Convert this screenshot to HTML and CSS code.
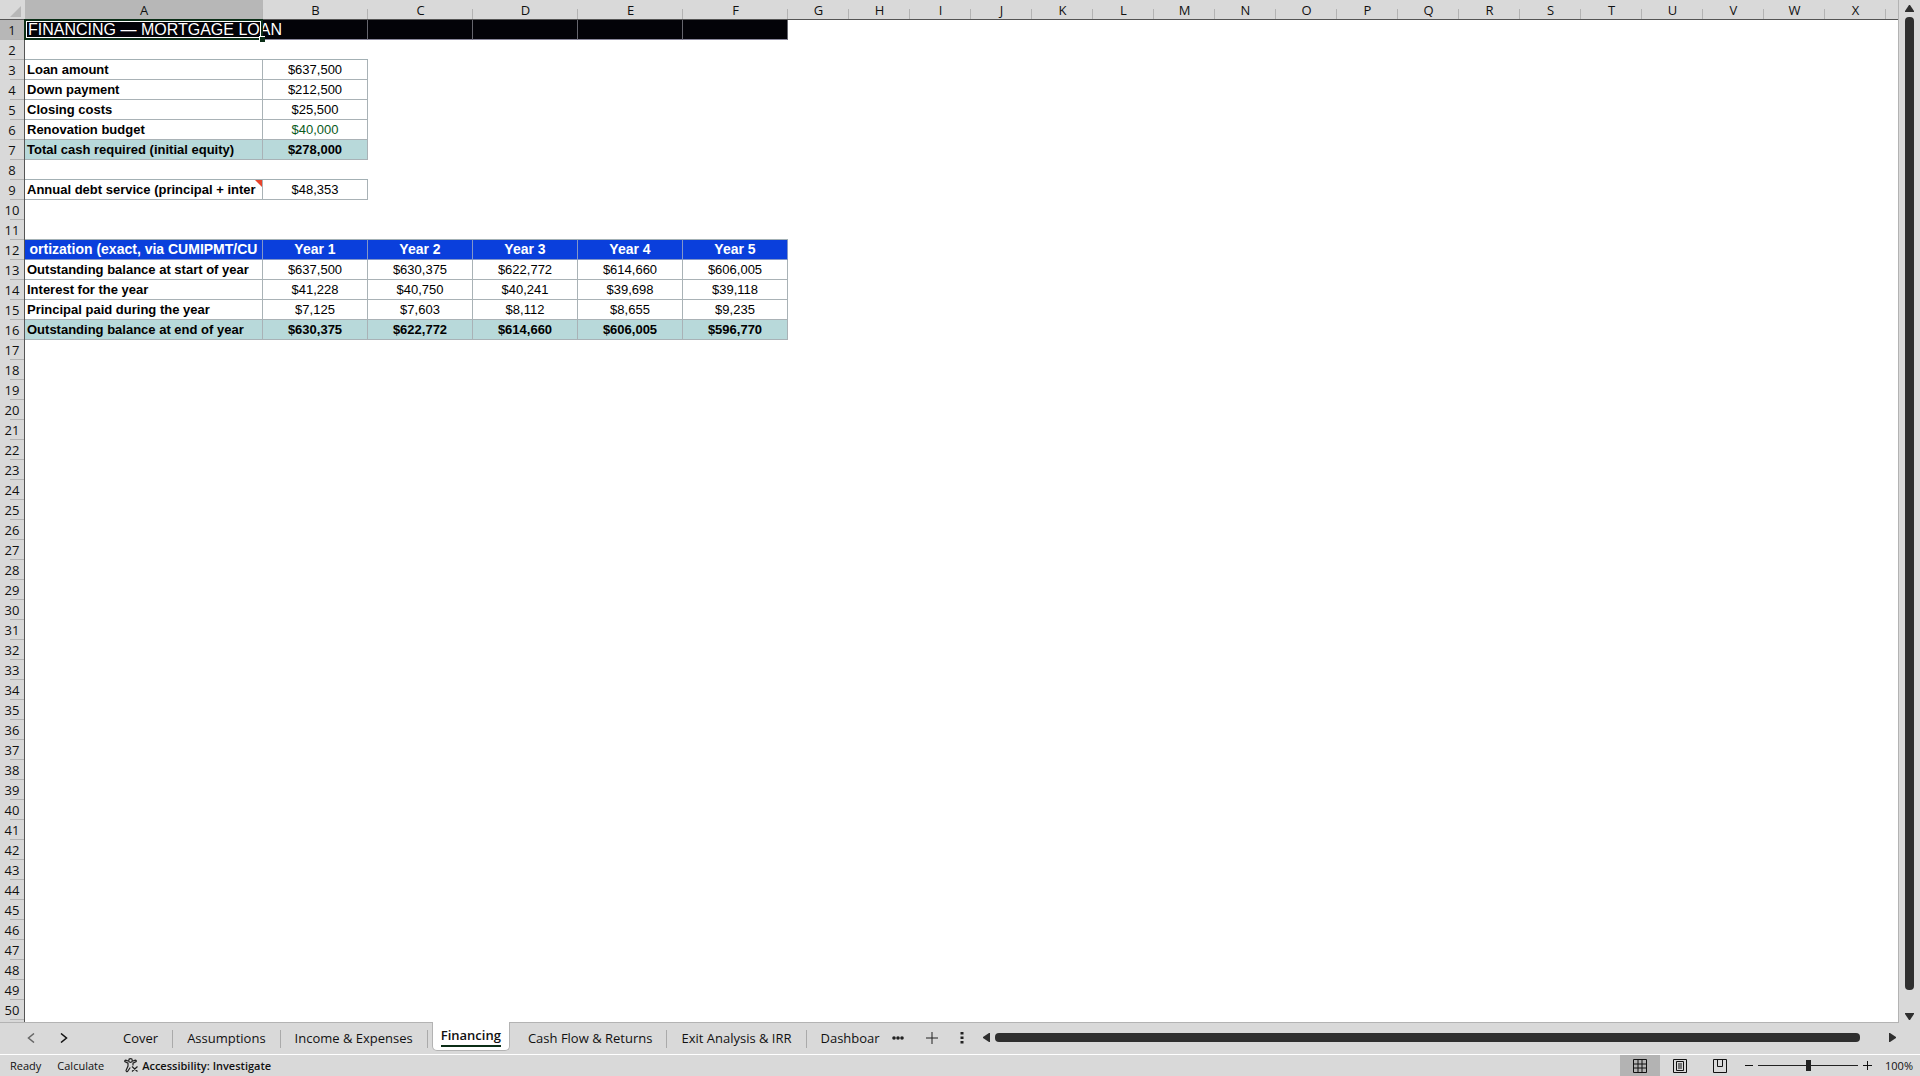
FILE: index.html
```html
<!DOCTYPE html>
<html lang="en">
<head>
    <meta charset="utf-8">
    <title>Financing</title>
    <link rel="stylesheet" href="styles.css">
</head>
<body>

    <main class="workspace">
        <div class="grid">
            <table class="sheet">
                <colgroup>
                    <col class="c-num"><col class="c-label">
                    <col class="c-val" span="5">
                    <col class="c-std" span="18">
                    <col>
                </colgroup>
                <thead>
                    <tr>
                        <th class="corner"><svg width="11" height="11" viewBox="0 0 11 11"><path d="M11 0V11H0Z" fill="#b7b7b7"/></svg></th>
                        <th class="active">A</th><th>B</th><th>C</th><th>D</th><th>E</th><th>F</th>
                        <th>G</th><th>H</th><th>I</th><th>J</th><th>K</th><th>L</th><th>M</th><th>N</th><th>O</th>
                        <th>P</th><th>Q</th><th>R</th><th>S</th><th>T</th><th>U</th><th>V</th><th>W</th><th>X</th>
                        <th class="rest"></th>
                    </tr>
                </thead>
                <tbody id="rows">
                    <tr class="title"><th class="active">1</th><td class="selected">FINANCING — MORTGAGE LOAN<span class="handle"></span></td><td></td><td></td><td></td><td></td><td></td></tr>
                    <tr class="above"><th>2</th><td></td><td></td></tr>
                    <tr class="data"><th>3</th><td>Loan amount</td><td>$637,500</td></tr>
                    <tr class="data"><th>4</th><td>Down payment</td><td>$212,500</td></tr>
                    <tr class="data"><th>5</th><td>Closing costs</td><td>$25,500</td></tr>
                    <tr class="data"><th>6</th><td>Renovation budget</td><td class="linked">$40,000</td></tr>
                    <tr class="data total"><th>7</th><td>Total cash required (initial equity)</td><td>$278,000</td></tr>
                    <tr class="above"><th>8</th><td></td><td></td></tr>
                    <tr class="data"><th>9</th><td class="note">Annual debt service (principal + inter</td><td>$48,353</td></tr>
                    <tr><th>10</th></tr>
                    <tr class="above"><th>11</th><td></td><td></td><td></td><td></td><td></td><td></td></tr>
                    <tr class="years"><th>12</th><td><div class="clip"><span>ortization (exact, via CUMIPMT/CU</span></div></td><td>Year 1</td><td>Year 2</td><td>Year 3</td><td>Year 4</td><td>Year 5</td></tr>
                    <tr class="data"><th>13</th><td>Outstanding balance at start of year</td><td>$637,500</td><td>$630,375</td><td>$622,772</td><td>$614,660</td><td>$606,005</td></tr>
                    <tr class="data"><th>14</th><td>Interest for the year</td><td>$41,228</td><td>$40,750</td><td>$40,241</td><td>$39,698</td><td>$39,118</td></tr>
                    <tr class="data"><th>15</th><td>Principal paid during the year</td><td>$7,125</td><td>$7,603</td><td>$8,112</td><td>$8,655</td><td>$9,235</td></tr>
                    <tr class="data total"><th>16</th><td>Outstanding balance at end of year</td><td>$630,375</td><td>$622,772</td><td>$614,660</td><td>$606,005</td><td>$596,770</td></tr>
                </tbody>
            </table>
        </div>
        <div class="vscroll">
            <svg width="9" height="7" viewBox="0 0 9 7"><path d="M4 0H5L9 6V7H0V6Z"/></svg>
            <div class="thumb"></div>
            <svg width="9" height="7" viewBox="0 0 9 7"><path d="M0 0H9V1L5 7H4L0 1Z"/></svg>
        </div>
    </main>

    <nav class="tabbar">
        <div class="arrows">
            <button aria-label="Previous sheet" class="dim"><svg width="8" height="10" viewBox="0 0 8 10"><path d="M7 .5 1.500 5 7 9.500"/></svg></button>
            <button aria-label="Next sheet"><svg width="8" height="10" viewBox="0 0 8 10"><path d="M1 .5 6.500 5 1 9.500"/></svg></button>
        </div>
        <div class="tabs">
            <button>Cover</button>
            <button>Assumptions</button>
            <button>Income &amp; Expenses</button>
            <button class="current"><span>Financing</span></button>
            <button>Cash Flow &amp; Returns</button>
            <button>Exit Analysis &amp; IRR</button>
            <button class="last">Dashboar</button>
        </div>
        <div class="tools">
            <button aria-label="More sheets"><svg width="12" height="4" viewBox="0 0 12 4"><circle cx="2" cy="2" r="1.800"/><circle cx="6" cy="2" r="1.800"/><circle cx="10" cy="2" r="1.800"/></svg></button>
            <button aria-label="New sheet"><svg width="12" height="12" viewBox="0 0 12 12"><path d="M5.500 0h1v5.500H12v1H6.500V12h-1V6.500H0v-1h5.500Z"/></svg></button>
            <button aria-label="Resize tabs"><svg width="4" height="12" viewBox="0 0 4 12"><path d="M.5 0h3v2.500h-3ZM.5 4.500h3V7h-3ZM.5 9h3v2.500h-3Z"/></svg></button>
        </div>
        <div class="hscroll">
            <svg width="7" height="9" viewBox="0 0 7 9"><path d="M7 0V9H6L0 5V4L6 0Z"/></svg>
            <div class="thumb"></div>
            <svg width="7" height="9" viewBox="0 0 7 9"><path d="M0 0V9H1L7 5V4L1 0Z"/></svg>
        </div>
    </nav>

    <footer class="status">
        <span class="ready">Ready</span>
        <span class="calc">Calculate</span>
        <button class="access">
            <svg width="15" height="15" viewBox="0 0 15 15" fill="none" stroke="#222" stroke-width="1.200">
                <circle cx="6.500" cy="2.500" r="1.800"/>
                <path d="M4.700 3.300 1.800 2.200Q.5 2.300.8 3.500L4 5.200V8L2 12.500Q2.200 14 3.500 13.500L6.300 9.500M8.300 3.300l3-1.100q1.300.1.900 1.300L9 5.200V7.500M8 8.500l5.500 5M13.500 8.500l-5.500 5"/>
            </svg>
            Accessibility: Investigate
        </button>
        <div class="views">
            <button class="on" aria-label="Normal view"><svg width="14" height="14" viewBox="0 0 14 14"><path d="M.5.5h13v13H.5ZM5 .5v13M9 .5v13M.5 5h13M.5 9h13"/></svg></button>
            <button aria-label="Page layout"><svg width="14" height="14" viewBox="0 0 14 14"><path d="M.5.5h13v13H.5ZM3.500 2.500h7v9h-7ZM5 5h4M5 7h4M5 9h4"/></svg></button>
            <button aria-label="Page break preview"><svg width="14" height="14" viewBox="0 0 14 14"><path d="M.5.5h13v13H.5ZM4.500.5v7h5v-7"/></svg></button>
        </div>
        <div class="zoom">
            <button aria-label="Zoom out"><svg width="8" height="9" viewBox="0 0 8 9"><path d="M0 4.500h8"/></svg></button>
            <input type="range" min="10" max="190" value="100" aria-label="Zoom">
            <button aria-label="Zoom in"><svg width="9" height="9" viewBox="0 0 9 9"><path d="M0 4.500h9M4.500 0v9"/></svg></button>
            <span class="level">100%</span>
        </div>
    </footer>

    <script>
        let rows = document.getElementById("rows");

        // empty rows below the data
        for (let i = 17; i <= 50; i++) {
            let row = document.createElement("tr");
            let head = document.createElement("th");
            head.textContent = i;
            row.appendChild(head);
            rows.appendChild(row);
        }
    </script>

</body>
</html>
```
FILE: styles.css
```css
* {
    box-sizing: border-box;
}

body {
    margin: 0;
    height: 100vh;
    display: flex;
    flex-direction: column;
    overflow: hidden;
    background-color: #d9d9d9;
    color: #111;
    font-family: "Open Sans", "Noto Sans", sans-serif;
}

button {
    border: 0;
    padding: 0;
    background: none;
    color: inherit;
    font: inherit;
    display: flex;
    align-items: center;
    justify-content: center;
}

svg {
    display: block;
}

/* grid */

.workspace {
    flex: 1;
    min-height: 0;
    display: flex;
}

.grid {
    flex: 1;
    min-width: 0;
    overflow: hidden;
    border-right: 1px solid #b3b3b3;
    border-bottom: 1px solid #b3b3b3;
    background: linear-gradient(to right, #d9d9d9 24px, #555 24px, #555 25px, #fff 25px);
}

.sheet {
    width: 100%;
    table-layout: fixed;
    border-spacing: 0;
}

.c-num {
    width: 25px;
}

.c-label {
    width: 238px;
}

.c-val {
    width: 105px;
}

.c-std {
    width: 61px;
}

.sheet th,
.sheet td {
    height: 20px;
    padding: 0;
    line-height: 19px;
    white-space: nowrap;
}

.sheet th {
    font-weight: 500;
    font-size: 13px;
}

.sheet thead th {
    padding-top: 2px;
    line-height: 17px;
    border-bottom: 1px solid #555;
    background: linear-gradient(#b3b3b3, #b3b3b3) right bottom / 1px 10px no-repeat #d9d9d9;
}

.sheet thead .active {
    background-color: #b7b7b7;
}

.sheet thead .rest {
    background: #d9d9d9;
}

.sheet thead .corner {
    padding: 4px 3px 0 10px;
    background: #d9d9d9;
}

.sheet tbody th {
    border-right: 1px solid #555;
    background: linear-gradient(#b3b3b3, #b3b3b3) right bottom / 14px 1px no-repeat #d9d9d9;
}

.sheet tbody .active {
    background-color: #b7b7b7;
}

.sheet td {
    font-family: "Liberation Sans", Arial, sans-serif;
    font-size: 13px;
    color: #000;
    text-align: center;
}

.above td {
    border-bottom: 1px solid #a3b0b4;
}

.title td {
    background-color: #030308;
    border-right: 1px solid #65656d;
    border-bottom: 1px solid #8a889c;
}

.sheet .selected {
    position: relative;
    padding-left: 3px;
    border-color: #030308;
    color: #fff;
    font-size: 16px;
    text-align: left;
}

.selected::after {
    content: "";
    position: absolute;
    inset: -1px;
    border: 2px solid #0b2e17;
    box-shadow: inset 0 0 0 1px #fff;
}

.handle {
    position: absolute;
    z-index: 1;
    right: -3px;
    bottom: -3px;
    width: 6px;
    height: 6px;
    background-color: #0b2e17;
    border-top: 1px solid #fff;
    border-left: 1px solid #fff;
}

.data td {
    border-right: 1px solid #a9b2b6;
    border-bottom: 1px solid #a9b2b6;
}

.data td:nth-child(2) {
    padding-left: 2px;
    font-weight: bold;
    text-align: left;
    overflow: hidden;
}

.total td {
    background-color: #b8d9da;
    font-weight: bold;
}

.data .linked {
    color: #0b5a1c;
}

.note {
    position: relative;
}

.note::after {
    content: "";
    position: absolute;
    top: 0;
    right: 0;
    border-top: 7px solid #e8452c;
    border-left: 7px solid transparent;
}

.years td {
    background-color: #0a3fdc;
    border-right: 1px solid #8296c8;
    border-bottom: 1px solid #8296c8;
    color: #fff;
    font-size: 14px;
    font-weight: bold;
}

.clip {
    display: flex;
    justify-content: center;
    overflow: hidden;
}

/* scroll bars */

.vscroll {
    width: 21px;
    padding: 5px 0 3px 6px;
    display: flex;
    flex-direction: column;
    gap: 5px;
    fill: #2f2f2f;
}

.thumb {
    background-color: #2f2f2f;
    border-radius: 4px;
}

.vscroll .thumb {
    width: 9px;
    flex: 1;
    margin-bottom: 18px;
}

.hscroll {
    flex: 1;
    display: flex;
    align-items: center;
    gap: 5px;
    padding-right: 24px;
    fill: #2f2f2f;
}

.hscroll .thumb {
    height: 9px;
    flex: 1;
    margin-right: 24px;
}

/* sheet tabs */

.tabbar {
    height: 31px;
    padding-bottom: 2px;
    display: flex;
    font-size: 13px;
}

.arrows {
    width: 109px;
    padding-left: 27px;
    display: flex;
    gap: 25px;
    fill: none;
    stroke: #111;
    stroke-width: 1.5;
}

.arrows .dim {
    stroke: #666;
}

.tabs {
    display: flex;
}

.tabs button {
    position: relative;
    padding: 0 15px 0 14px;
}

.tabs button::after {
    content: "";
    position: absolute;
    right: 0;
    top: 7px;
    width: 1px;
    height: 18px;
    background-color: #aaa;
}

.tabs .current {
    height: 29px;
    margin: -1px 4px 0;
    padding: 0 8px;
    background-color: #fff;
    border: 1px solid #b3b3b3;
    border-top: 0;
    border-radius: 0 0 5px 5px;
    font-weight: 600;
}

.tabs .current::after,
.tabs .last::after {
    display: none;
}

.current span {
    line-height: 20px;
    border-bottom: 2px solid #0b2e17;
}

.tabs .last {
    padding-right: 0;
}

.tools {
    display: flex;
    padding: 0 19px 0 12px;
    gap: 22px;
    fill: #222;
}

/* status bar */

.status {
    height: 22px;
    border-top: 1px solid #fff;
    display: flex;
    align-items: center;
    font-size: 11px;
}

.ready {
    margin: 0 16px 0 10px;
}

.access {
    margin-left: 20px;
    gap: 3px;
    font-weight: 600;
}

.views {
    margin-left: auto;
    align-self: stretch;
    display: flex;
    fill: none;
    stroke: #111;
}

.views button {
    width: 40px;
}

.views .on {
    background-color: #b3b3b3;
}

.zoom {
    display: flex;
    align-items: center;
    gap: 5px;
    padding: 0 7px 0 5px;
    stroke: #111;
}

.zoom input {
    appearance: none;
    width: 100px;
    height: 12px;
    margin: 0;
    background: linear-gradient(#222, #222) center / 100% 1px no-repeat;
}

.zoom input::-webkit-slider-thumb {
    appearance: none;
    width: 5px;
    height: 11px;
    background-color: #222;
}

.level {
    width: 36px;
    text-align: right;
}
```
